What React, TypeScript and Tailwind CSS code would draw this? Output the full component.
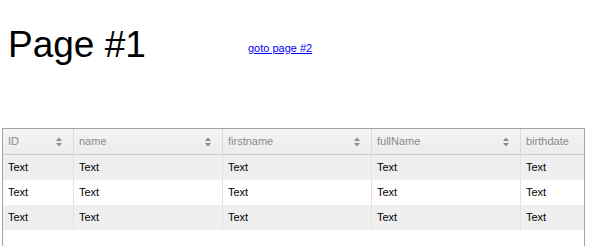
const columns = [
  { key: "ID", width: "w-[71px]" },
  { key: "name", width: "w-[149px]" },
  { key: "firstname", width: "w-[149px]" },
  { key: "fullName", width: "w-[149px]" },
  { key: "birthdate", width: "w-[149px]" },
];

const rows = [0, 1, 2];

const SortIcon = () => (
  <svg width="6" height="10" viewBox="0 0 6 10" className="shrink-0">
    <path d="M3 0.5L6 4H0Z M0 6H6L3 9.5Z" fill="#8c8c8c" />
  </svg>
);

const App = () => {
  return (
    <div className="h-[246px] w-full overflow-hidden bg-white font-['Liberation_Sans',Arial,sans-serif] text-black">
      {/* Title + link */}
      <div className="flex items-start">
        <h1 className="ml-2 mt-[26px] w-[240px] shrink-0 text-[37px] leading-none font-normal">
          Page #1
        </h1>
        <a
          href="#"
          className="mt-[43px] text-[11px] leading-none text-[#0000ff] underline"
        >
          goto page #2
        </a>
      </div>

      {/* Grid */}
      <div className="ml-[2px] mt-[65px] h-[140px] w-[583px] overflow-hidden border border-[#a3a3a3]">
        <div className="flex h-[26px] border-b border-[#cccccc] bg-gradient-to-b from-[#f4f4f4] to-[#ececec]">
          {columns.map((col) => (
            <div
              key={col.key}
              className={`${col.width} flex shrink-0 items-center justify-between border-r border-[#dadada] pl-[5px] pr-[11px] text-[11px] text-[#8a8a8a]`}
            >
              <span>{col.key}</span>
              <SortIcon />
            </div>
          ))}
        </div>
        {rows.map((r) => (
          <div
            key={r}
            className={`flex h-[25px] ${r % 2 === 0 ? "bg-[#efefef]" : "bg-white"}`}
          >
            {columns.map((col) => (
              <div
                key={col.key}
                className={`${col.width} flex shrink-0 items-center border-r border-[#e2e2e2] pl-[5px] text-[11px] text-black`}
              >
                Text
              </div>
            ))}
          </div>
        ))}
      </div>
    </div>
  );
};

export default App;
